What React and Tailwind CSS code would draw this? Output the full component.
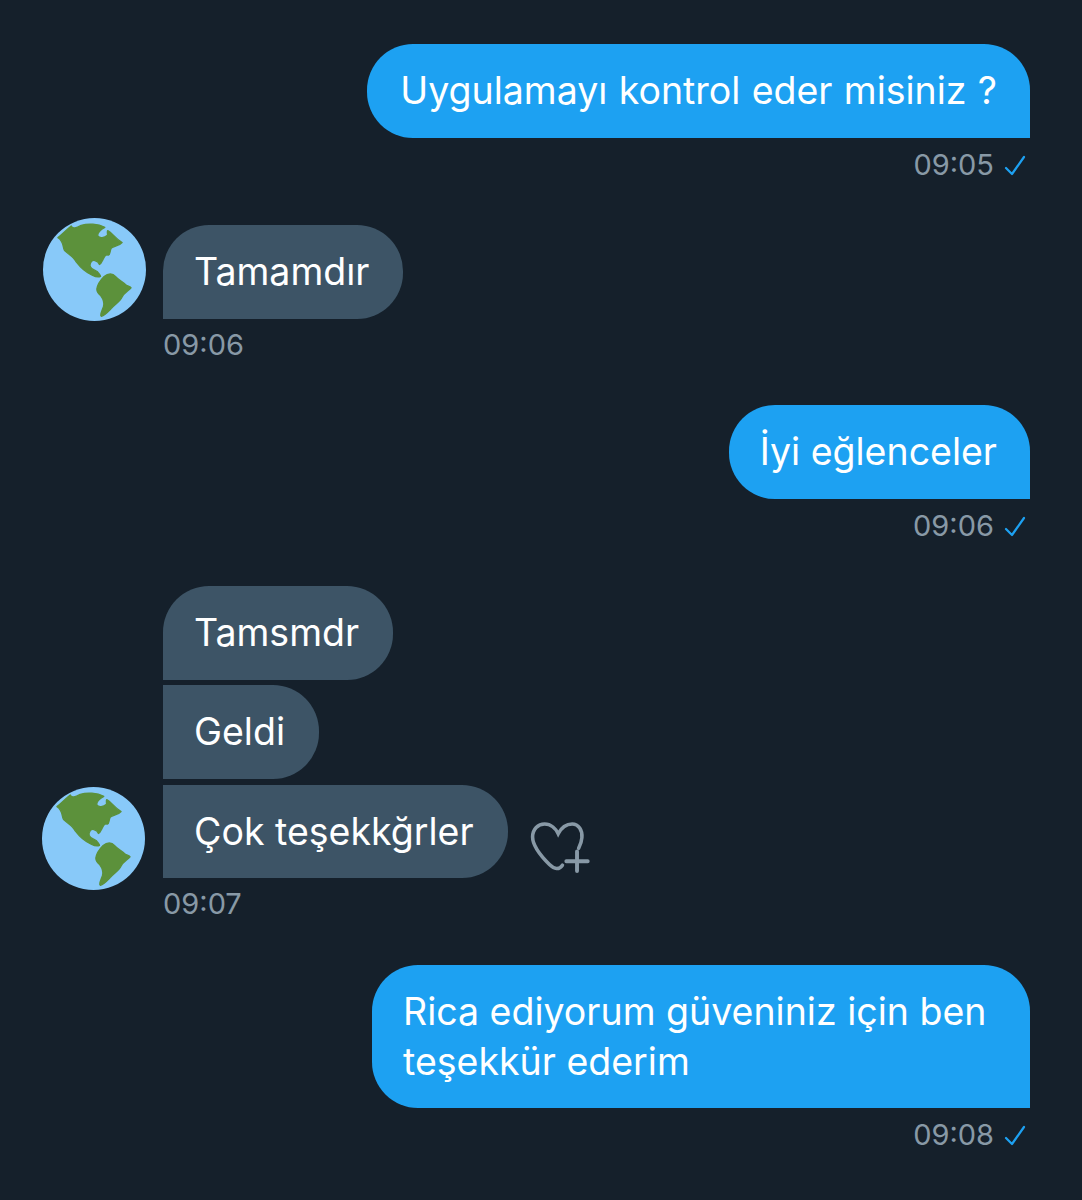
function Globe({ className }) {
  return (
    <svg viewBox="40 38 310 310" className={`w-[103px] h-[103px] shrink-0 ${className}`}>
      <circle cx="195" cy="193" r="155" fill="#88c9f9" />
      <g fill="#5c913b" stroke="#5c913b" strokeWidth="4" strokeLinejoin="round">
        <path d="M85 97C100 85 112 72 125 62C130 72 140 68 155 60C175 54 205 55 226 66C215 72 203 82 205 92C210 100 225 98 234 90C235 84 232 78 235 76C248 82 256 98 278 112C270 122 255 122 246 128C240 136 244 148 236 150C228 146 224 156 220 164C216 172 214 176 210 178C208 172 206 168 196 166C186 164 180 174 182 184C186 194 196 194 204 200C208 206 214 210 213 214C204 218 196 214 188 210C170 202 152 186 140 170C132 154 118 148 105 136C98 126 104 108 85 97Z" />
        <path d="M202 252C204 238 212 226 224 214C236 204 250 204 258 214C268 226 284 232 290 240C298 244 304 246 305 248C296 258 284 262 278 276C272 290 258 296 246 310C236 320 226 332 216 334C210 332 218 316 222 304C226 290 220 280 214 272C206 266 202 260 202 252Z" />
      </g>
    </svg>
  );
}

function Check() {
  return (
    <svg viewBox="0 0 22 24" fill="none" className="w-[22px] h-[24px] mr-[4px] mt-[2px]">
      <path d="M2 14L8 20L20 3" stroke="#1da1f2" strokeWidth="2.2" strokeLinecap="round" strokeLinejoin="round" />
    </svg>
  );
}

function SentMessage({ text, time, className, mt }) {
  return (
    <div className={`flex flex-col items-end ${mt}`}>
      <div className={`bg-[#1da1f2] text-white rounded-[46px] rounded-br-none pt-[22px] ${className}`}>
        {text}
      </div>
      <div className="flex items-center gap-[10px] mt-[12px] h-[28px] pt-[1px] text-[29px] leading-[28px] text-[#8899a6]">
        {time}
        <Check />
      </div>
    </div>
  );
}

function Bubble({ text, className = "" }) {
  return (
    <div className={`bg-[#3d5466] text-white rounded-[46px] rounded-bl-none pl-[31px] pr-[34px] pt-[22px] w-fit ${className}`}>
      {text}
    </div>
  );
}

function Time({ text }) {
  return <div className="mt-[12px] h-[28px] text-[29px] leading-[28px] text-[#8899a6]">{text}</div>;
}

export default function App() {
  return (
    <div
      className="min-h-[1200px] bg-[#15202b] pt-[44px] pr-[52px] text-[37.5px] leading-[50px]"
      style={{ fontFamily: "Inter, 'Liberation Sans', sans-serif" }}
    >
      <SentMessage
        text="Uygulamayı kontrol eder misiniz ?"
        time="09:05"
        className="pl-[33px] pr-[33px] pb-[22px] [word-spacing:0.75px]"
      />

      {/* Received */}
      <div className="flex items-start mt-[47px] pl-[43px]">
        <Globe className="-mt-[7px]" />
        <div className="ml-[17px]">
          <Bubble text="Tamamdır" className="pb-[22px]" />
          <Time text="09:06" />
        </div>
      </div>

      <SentMessage text="İyi eğlenceler" time="09:06" mt="mt-[46px]" className="pl-[31px] pr-[33px] pb-[22px]" />

      {/* Received group */}
      <div className="flex items-start mt-[47px] pl-[42px]">
        <Globe className="mt-[201px]" />
        <div className="ml-[18px]">
          <Bubble text="Tamsmdr" className="pb-[22px]" />
          <Bubble text="Geldi" className="mt-[5px] rounded-tl-none pb-[22px]" />
          <div className="flex items-start mt-[6px]">
            <Bubble text="Çok teşekkğrler" className="rounded-tl-none pb-[21px]" />
            <svg viewBox="60 60 185 165" fill="none" className="w-[60px] h-[55px] ml-[22px] mt-[35px]">
              <path
                d="M160 197C150 212 135 210 120 195C95 170 68 140 68 110C68 85 85 70 105 70C125 70 140 85 147 100C155 85 170 70 190 70C210 70 222 90 220 112C219 125 215 135 210 145"
                stroke="#8899a6"
                strokeWidth="11"
                strokeLinecap="round"
              />
              <path d="M205 155V215M172 185H238" stroke="#8899a6" strokeWidth="12" strokeLinecap="round" />
            </svg>
          </div>
          <Time text="09:07" />
        </div>
      </div>

      <SentMessage
        text="Rica ediyorum güveniniz için ben teşekkür ederim"
        time="09:08"
        mt="mt-[47px]"
        className="w-[658px] pl-[31px] pr-[33px] pb-[21px]"
      />
    </div>
  );
}
